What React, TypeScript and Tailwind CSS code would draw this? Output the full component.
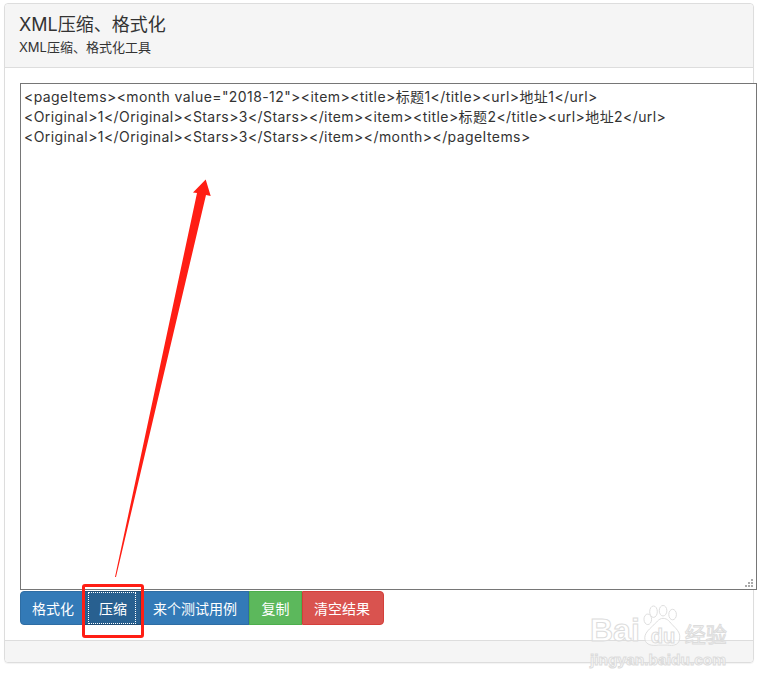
import React from 'react';

const font = 'font-["Inter","Noto_Sans_CJK_SC",sans-serif]';

const sample = `<pageItems><month value="2018-12"><item><title>标题1</title><url>地址1</url>
<Original>1</Original><Stars>3</Stars></item><item><title>标题2</title><url>地址2</url>
<Original>1</Original><Stars>3</Stars></item></month></pageItems>`;

const outline = 'text-white/60 [-webkit-text-stroke:1px_#dcdcdc]';

export default function App() {
  return (
    <div className={`relative h-[685px] w-[769px] overflow-hidden bg-white text-[#333] ${font}`}>
      <div className="pt-[3px] pl-[4px]">
        {/* panel */}
        <div className="w-[750px] rounded border border-[#ddd] shadow-[0_1px_1px_rgba(0,0,0,0.05)]">
          <div className="h-[64px] rounded-t border-b border-[#ddd] bg-[#f5f5f5] px-[14px] pt-[10px]">
            <h3 className="text-[18px] leading-[22px] text-[#333]">XML压缩、格式化</h3>
            <p className="mt-px text-[13px] leading-[20px] text-[#333]">XML压缩、格式化工具</p>
          </div>
          <div className="h-[572px] pt-[15px] pl-[15px]">
            <div className="relative h-[507px] w-[737px]">
              <textarea
                readOnly
                value={sample}
                className="block h-full w-full resize-none border border-[#767676] bg-white px-[3px] py-[3px] text-[14px] leading-[20px] tracking-[0.42px] whitespace-pre text-[#333] outline-none"
              />
              {/* resize grip */}
              <svg className="absolute right-[3px] bottom-[3px]" width="9" height="8" viewBox="0 0 9 8" fill="#aaa">
                <rect x="6" y="0" width="2" height="2" />
                <rect x="3" y="3" width="2" height="2" />
                <rect x="6" y="3" width="2" height="2" />
                <rect x="0" y="6" width="2" height="2" />
                <rect x="3" y="6" width="2" height="2" />
                <rect x="6" y="6" width="2" height="2" />
              </svg>
            </div>
            <div className="mt-px flex h-[34px] w-fit text-[14px] text-white">
              <button className="w-[63px] rounded-l border border-[#2e6da4] bg-[#337ab7] pl-[3px]">格式化</button>
              <button className="w-[58px] border border-[#204d74] bg-[#286090] px-[4px]">
                <span className="flex h-full items-center justify-center border border-dotted border-white pl-[2px]">压缩</span>
              </button>
              <button className="w-[108px] border border-[#2e6da4] bg-[#337ab7]">来个测试用例</button>
              <button className="w-[53px] border border-[#4cae4c] bg-[#5cb85c]">复制</button>
              <button className="w-[82px] rounded-r border border-[#d43f3a] bg-[#d9534f] pr-[2px]">清空结果</button>
            </div>
          </div>
          <div className="h-[22px] rounded-b border-t border-[#ddd] bg-[#f5f5f5]" />
        </div>
      </div>

      {/* annotation: arrow and highlight */}
      <svg className="absolute top-0 left-0" width="769" height="685" viewBox="0 0 769 685">
        <polygon points="115,577 197,193 193,192.5 205.7,179.5 210.7,196 206,195 116,577" fill="#ff1e14" />
      </svg>
      <div className="absolute top-[584px] left-[82px] h-[54px] w-[62px] rounded-[3px] border-[3px] border-[#ff1e14]" />

      {/* watermark */}
      <div className="absolute top-[602px] left-[590px] flex w-[140px] flex-col">
        <div className="flex h-[46px] items-end font-['Liberation_Sans',sans-serif] font-bold">
          <span className={`text-[32px] leading-[36px] ${outline}`}>Bai</span>
          <span className="relative ml-[3px] h-[44px] w-[42px] shrink-0">
            <svg width="42" height="44" viewBox="0 0 44 44" fill="#fff" fillOpacity="0.5" stroke="#dcdcdc" strokeWidth="1">
              <ellipse cx="11" cy="7" rx="4" ry="6" />
              <ellipse cx="21" cy="6" rx="4" ry="5.5" />
              <ellipse cx="31" cy="10" rx="4" ry="5.5" />
              <ellipse cx="5" cy="15" rx="4" ry="5.5" />
              <path d="M21 14c5 0 7 4 11 8 4 4 8 8 6 15-1 5-7 6-12 5H16c-6 1-13 0-14-6-1-6 4-10 8-14 4-3 6-8 11-8z" />
            </svg>
            <span className={`absolute bottom-[2px] left-[8px] text-[20px] leading-[20px] ${outline}`}>du</span>
          </span>
          <span className={`mb-[3px] font-['Noto_Sans_CJK_SC',sans-serif] text-[21px] leading-[24px] font-normal whitespace-nowrap ${outline}`}>经验</span>
        </div>
        <div className={`mt-[2px] font-['Liberation_Sans',sans-serif] text-[15.5px] leading-[20px] font-bold whitespace-nowrap ${outline}`}>
          jingyan.baidu.com
        </div>
      </div>
    </div>
  );
}
